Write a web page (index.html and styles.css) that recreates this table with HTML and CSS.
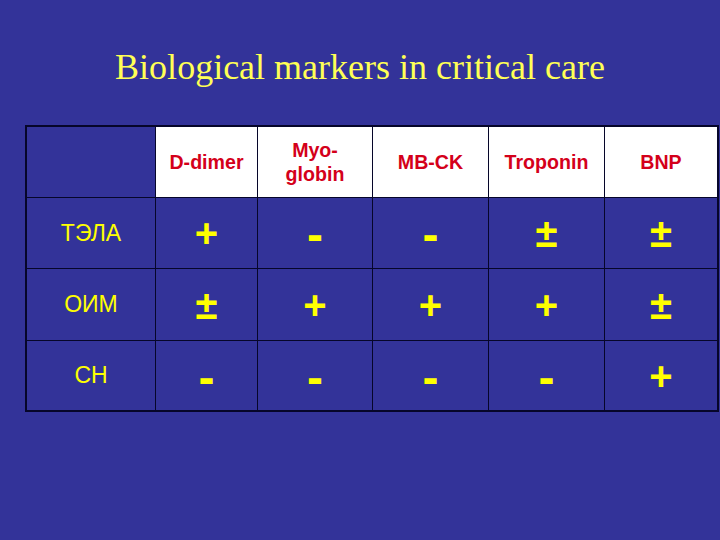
FILE: index.html
```html
<!DOCTYPE html>
<html>
<head>
<meta charset="utf-8">
<link rel="stylesheet" href="styles.css">
</head>
<body>
<div class="slide">
  <h1 class="title">Biological markers in critical care</h1>
  <div class="grid">
    <div class="cell corner"></div>
    <div class="cell head">D-dimer</div>
    <div class="cell head">Myo-<br>globin</div>
    <div class="cell head">MB-CK</div>
    <div class="cell head">Troponin</div>
    <div class="cell head">BNP</div>

    <div class="cell label">ТЭЛА</div>
    <div class="cell sym">+</div>
    <div class="cell sym minus">-</div>
    <div class="cell sym minus">-</div>
    <div class="cell sym">±</div>
    <div class="cell sym">±</div>

    <div class="cell label">ОИМ</div>
    <div class="cell sym">±</div>
    <div class="cell sym">+</div>
    <div class="cell sym">+</div>
    <div class="cell sym">+</div>
    <div class="cell sym">±</div>

    <div class="cell label">СН</div>
    <div class="cell sym minus">-</div>
    <div class="cell sym minus">-</div>
    <div class="cell sym minus">-</div>
    <div class="cell sym minus">-</div>
    <div class="cell sym">+</div>
  </div>
</div>
</body>
</html>
```
FILE: styles.css
```css
html, body {
  margin: 0;
  padding: 0;
  background: #333399;
}
.slide {
  width: 720px;
  height: 540px;
  overflow: hidden;
  background: #333399;
}
.title {
  margin: 0;
  padding-top: 47px;
  height: 125px;
  box-sizing: border-box;
  font-family: "Liberation Serif", "Times New Roman", serif;
  font-weight: normal;
  font-size: 36px;
  line-height: 40px;
  color: #ffff55;
  text-align: center;
}
.grid {
  margin-left: 25px;
  width: 694px;
  box-sizing: border-box;
  border: 2px solid #06062a;
  background: #06062a;
  display: grid;
  grid-template-columns: 128px 101px 114px 115px 115px 112px;
  grid-template-rows: 70px 70px 71px 69px;
  gap: 1px;
}
.cell {
  background: #333399;
  display: flex;
  align-items: center;
  justify-content: center;
  text-align: center;
  font-family: "Liberation Sans", Arial, sans-serif;
}
.corner {
  background: #333399;
}
.head {
  background: #ffffff;
  color: #d4001a;
  font-weight: bold;
  font-size: 19.6px;
  line-height: 24px;
}
.label {
  color: #ffff00;
  font-size: 23px;
}
.sym {
  color: #ffff00;
  font-weight: bold;
  font-size: 40px;
  line-height: 40px;
}
.minus {
  font-size: 48px;
  padding-top: 4px;
}
```
